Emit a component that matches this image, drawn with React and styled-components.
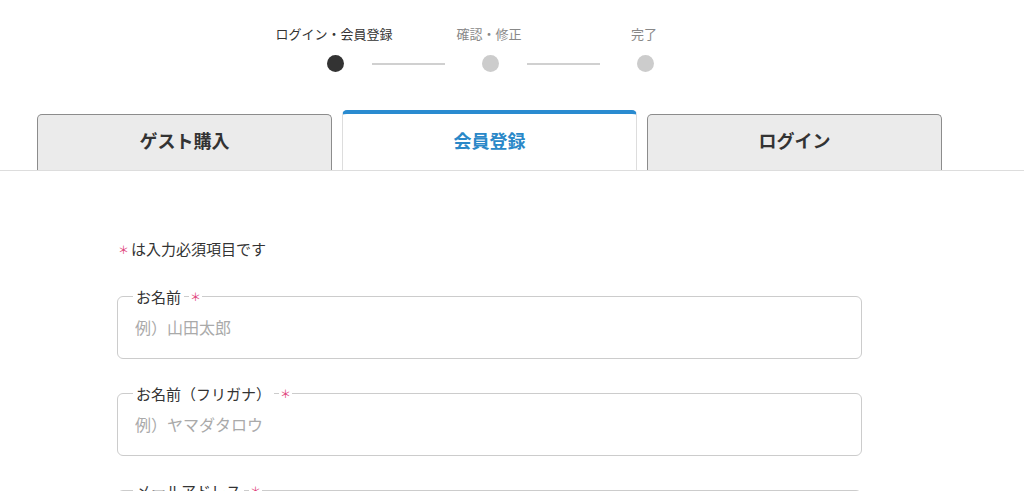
import React from "react";
import styled, { createGlobalStyle } from "styled-components";

const Global = createGlobalStyle`
  html, body { margin: 0; padding: 0; background: #fff; overflow: hidden; }
  body { font-family: "Noto Sans CJK JP", "Noto Sans", sans-serif; color: #333; }
  * { box-sizing: border-box; }
`;

const Page = styled.div`
  width: 978px;
`;

const Stepper = styled.div`
  display: flex;
  flex-direction: column;
  align-items: center;
  padding-top: 25px;
`;

const StepLabels = styled.div`
  display: grid;
  grid-template-columns: repeat(3, 155px);
`;

const StepLabel = styled.div`
  text-align: center;
  font-size: 13px;
  line-height: 18px;
  color: ${(p) => (p.$active ? "#333" : "#888")};
  white-space: nowrap;
`;

const StepTrack = styled.div`
  display: flex;
  align-items: center;
  margin-top: 12px;
  margin-left: 3px;
`;

const Dot = styled.span`
  width: 17px;
  height: 17px;
  border-radius: 50%;
  background: ${(p) => (p.$active ? "#333" : "#ccc")};
`;

const Connector = styled.span`
  width: 73px;
  height: 2px;
  background: #d0d0d0;
  margin: 0 37px 0 28px;
`;

const TabBar = styled.div`
  margin-top: 38px;
  border-bottom: 1px solid #ddd;
  width: 1024px;
`;

const TabRow = styled.div`
  display: flex;
  align-items: flex-end;
  gap: 10px;
  width: 905px;
  margin-left: 37px;
  height: 60px;
`;

const Tab = styled.div`
  flex: 0 0 295px;
  display: flex;
  align-items: center;
  justify-content: center;
  font-size: 18px;
  font-weight: 700;
  border-radius: 5px 5px 0 0;
  padding-bottom: 5px;
  ${(p) =>
    p.$active
      ? `
    height: 60px;
    background: #fff;
    color: #2a88c8;
    border: 1px solid #ddd;
    border-top: 4px solid #2a8bd0;
    border-bottom: none;
  `
      : `
    height: 56px;
    background: #ebebeb;
    color: #333;
    border: 1px solid #8c8c8c;
    border-bottom: none;
  `}
`;

const Form = styled.form`
  width: 745px;
  margin: 0 0 0 117px;
  padding-top: 69px;
`;

const Note = styled.p`
  margin: 0 0 30px 1px;
  font-size: 15px;
  line-height: 18px;
  color: #333;
`;

const Req = styled.span`
  color: #e0407a;
  font-size: 11px;
  margin-right: 2px;
  vertical-align: 1px;
`;

const Field = styled.fieldset`
  margin: 0 0 26px 0;
  padding: 4px 15px 13px;
  border: 1px solid #ccc;
  border-radius: 6px;
`;

const Legend = styled.legend`
  position: relative;
  padding: 0 3px;
  font-size: 15px;
  line-height: 17px;
  color: #333;
`;

const LegendReq = styled.span`
  position: absolute;
  left: 100%;
  top: 1px;
  margin-left: 5px;
  padding: 0 1px;
  background: #fff;
  color: #e0407a;
  font-size: 11px;
  line-height: 15px;
`;

const Input = styled.input`
  display: block;
  width: 100%;
  height: 36px;
  border: none;
  outline: none;
  padding: 0 2px;
  font-family: inherit;
  font-size: 16px;
  color: #333;
  &::placeholder { color: #aaa; }
`;

const steps = ["ログイン・会員登録", "確認・修正", "完了"];

const fields = [
  { label: "お名前", placeholder: "例）山田太郎" },
  { label: "お名前（フリガナ）", placeholder: "例）ヤマダタロウ" },
  { label: "メールアドレス", placeholder: "例）sample@example.com" },
];

export default function App() {
  return (
    <Page>
      <Global />
      <Stepper>
        <StepLabels>
          {steps.map((s, i) => (
            <StepLabel key={s} $active={i === 0}>{s}</StepLabel>
          ))}
        </StepLabels>
        <StepTrack>
          <Dot $active />
          <Connector />
          <Dot />
          <Connector />
          <Dot />
        </StepTrack>
      </Stepper>
      <TabBar>
        <TabRow>
          <Tab>ゲスト購入</Tab>
          <Tab $active>会員登録</Tab>
          <Tab>ログイン</Tab>
        </TabRow>
      </TabBar>
      <Form onSubmit={(e) => e.preventDefault()}>
        <Note><Req>＊</Req>は入力必須項目です</Note>
        {fields.map((f) => (
          <Field key={f.label}>
            <Legend>
              {f.label}
              <LegendReq>＊</LegendReq>
            </Legend>
            <Input placeholder={f.placeholder} />
          </Field>
        ))}
      </Form>
    </Page>
  );
}
